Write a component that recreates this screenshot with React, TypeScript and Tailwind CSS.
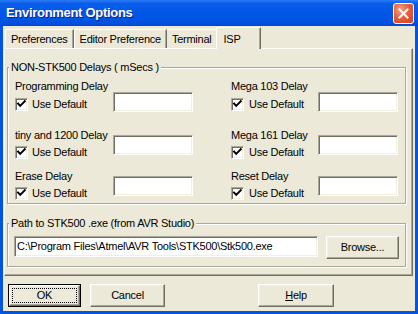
import React from "react";

const sunken =
  "border border-t-[#aca899] border-l-[#aca899] border-r-white border-b-white shadow-[inset_1px_1px_0_#716f64,inset_-1px_-1px_0_#f1efe2] bg-white";
const raised =
  "border border-t-white border-l-white border-r-[#716f64] border-b-[#716f64] shadow-[inset_-1px_-1px_0_#aca899,inset_1px_1px_0_#f1efe2] bg-[#ece9d8]";

function Check() {
  return (
    <div className={`relative w-[13px] h-[13px] shrink-0 ${sunken}`}>
      <svg className="absolute left-0 top-0" width="11" height="11" viewBox="0 0 11 11">
        <path d="M2 4.5 L4.2 6.8 L8.8 2.2" fill="none" stroke="#000" strokeWidth="1.9" strokeLinecap="square" />
      </svg>
    </div>
  );
}

function Cell({
  label,
  gap,
  boxTop,
  labelW,
  textGap,
}: {
  label: string;
  gap: number;
  boxTop: number;
  labelW: number;
  textGap: number;
}) {
  return (
    <div className="flex">
      <div className="shrink-0" style={{ width: labelW }}>
        <div className="h-[13px] leading-[13px] whitespace-nowrap">{label}</div>
        <div className="flex items-center h-[13px]" style={{ marginTop: gap }}>
          <Check />
          <span className="leading-[13px] whitespace-nowrap" style={{ marginLeft: textGap }}>
            Use Default
          </span>
        </div>
      </div>
      <div className={`w-[80px] h-[20px] ${sunken}`} style={{ marginTop: boxTop }} />
    </div>
  );
}

function Column({
  labels,
  width,
  labelW,
  textGap,
}: {
  labels: string[];
  width: string;
  labelW: number;
  textGap: number;
}) {
  return (
    <div className={`flex flex-col ${width}`}>
      <Cell label={labels[0]} gap={5} boxTop={12} labelW={labelW} textGap={textGap} />
      <div className="mt-[17px]">
        <Cell label={labels[1]} gap={4} boxTop={6} labelW={labelW} textGap={textGap} />
      </div>
      <div className="mt-[11px]">
        <Cell label={labels[2]} gap={4} boxTop={6} labelW={labelW} textGap={textGap} />
      </div>
    </div>
  );
}

export default function App() {
  const groupCls =
    "w-[399px] ml-[2px] border border-[#aca899] shadow-[inset_1px_1px_0_#fff,1px_1px_0_#fff]";
  const legendCls = "ml-[1px] px-[2px] leading-[12px] bg-[#ece9d8] relative";
  return (
    <div className="w-[418px] h-[314px] bg-[#0454e4] flex flex-col font-['Liberation_Sans',Arial,sans-serif] text-[11px] tracking-[-0.25px] text-black overflow-hidden">
      {/* Title bar */}
      <div className="h-[26px] shrink-0 flex items-center bg-[linear-gradient(180deg,#2f7df7_0%,#0a5fec_12%,#0256e6_50%,#0153e2_85%,#0447d0_100%)]">
        <div className="ml-[6px] text-white font-bold text-[13px] tracking-[-0.3px] [text-shadow:1px_1px_#0a1f8f] flex-1">
          Environment Options
        </div>
        <div className="mr-[4px] w-[21px] h-[21px] rounded-[3px] border border-white bg-[radial-gradient(circle_at_35%_30%,#f4a184_0%,#e5603f_45%,#c8401f_100%)] flex items-center justify-center">
          <svg width="11" height="11" viewBox="0 0 11 11">
            <path d="M1.5 1.5 L9.5 9.5 M9.5 1.5 L1.5 9.5" stroke="#fff" strokeWidth="2" strokeLinecap="square" />
          </svg>
        </div>
      </div>
      {/* Client */}
      <div className="mx-[3px] mb-[3px] flex-1 bg-[#ece9d8] flex flex-col">
        {/* Tabs */}
        <div className="h-[22px] flex items-end pl-[2px] relative z-10">
          <div className="h-[19px] px-[5px] flex items-center border-t border-l border-white rounded-tl-[2px] border-r border-r-[#716f64] shadow-[inset_-1px_0_0_#aca899]">
            Preferences
          </div>
          <div className="h-[19px] px-[5px] flex items-center border-t border-l border-white rounded-tl-[2px] border-r border-r-[#716f64] shadow-[inset_-1px_0_0_#aca899]">
            Editor Preference
          </div>
          <div className="h-[19px] px-[5px] flex items-center border-t border-white rounded-tl-[2px] border-r border-r-[#716f64] shadow-[inset_-1px_0_0_#aca899]">
            Terminal
          </div>
          <div className="-ml-[2px] h-[22px] -mb-px w-[45px] pl-[7px] pt-[1px] flex items-center bg-[#ece9d8] border-t border-l border-white rounded-tl-[2px] border-r border-r-[#716f64] shadow-[inset_-1px_0_0_#aca899]">
            ISP
          </div>
        </div>
        {/* Panel */}
        <div className="ml-[1px] mr-[2px] h-[228px] border border-t-white border-l-white border-r-[#716f64] border-b-[#716f64] shadow-[inset_-1px_-1px_0_#aca899]">
          <fieldset className={`${groupCls} mt-[12px]`}>
            <legend className={legendCls}>NON-STK500 Delays ( mSecs )</legend>
            <div className="flex pl-[7px] pt-[7px] pb-[3px]">
              <Column
                labels={["Programming Delay", "tiny and 1200 Delay", "Erase Delay"]}
                width="w-[216px]"
                labelW={98}
                textGap={4}
              />
              <Column
                labels={["Mega 103 Delay", "Mega 161 Delay", "Reset Delay"]}
                width="w-[170px]"
                labelW={87}
                textGap={5}
              />
            </div>
          </fieldset>
          <fieldset className={`${groupCls} mt-[13px]`}>
            <legend className={legendCls}>Path to STK500 .exe (from AVR Studio)</legend>
            <div className="flex items-start pl-[6px] pt-[7px] pb-[7px]">
              <div className={`w-[304px] h-[21px] pl-[2px] flex items-center leading-[13px] whitespace-nowrap ${sunken}`}>
                C:\Program Files\Atmel\AVR Tools\STK500\Stk500.exe
              </div>
              <div className={`ml-[8px] w-[73px] h-[23px] flex items-center justify-center ${raised}`}>
                Browse...
              </div>
            </div>
          </fieldset>
        </div>
        {/* Buttons */}
        <div className="mt-[8px] pl-[5px] flex">
          <div className="w-[73px] h-[23px] border border-black">
            <div className={`w-full h-full flex items-center justify-center relative ${raised}`}>
              <div className="absolute inset-[2px] border border-dotted border-black" />
              OK
            </div>
          </div>
          <div className={`ml-[9px] w-[75px] h-[23px] flex items-center justify-center ${raised}`}>
            Cancel
          </div>
          <div className={`ml-[93px] w-[76px] h-[23px] flex items-center justify-center ${raised}`}>
            <span>
              <span className="underline">H</span>elp
            </span>
          </div>
        </div>
      </div>
    </div>
  );
}
